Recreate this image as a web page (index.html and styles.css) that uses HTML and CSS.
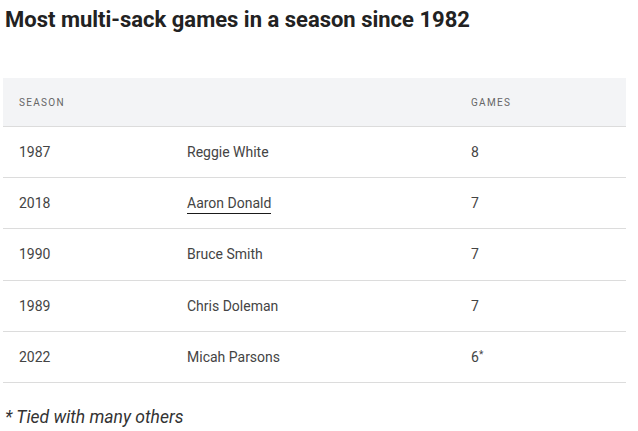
FILE: index.html
```html
<!DOCTYPE html>
<html>
<head>
<meta charset="utf-8">
<link rel="stylesheet" href="styles.css">
</head>
<body>
<div class="page">
  <h2 class="title">Most multi-sack games in a season since 1982</h2>
  <table class="stats">
    <thead>
      <tr><th class="c1">Season</th><th class="c2"></th><th class="c3">Games</th></tr>
    </thead>
    <tbody>
      <tr><td>1987</td><td>Reggie White</td><td>8</td></tr>
      <tr><td>2018</td><td><a class="link" href="#">Aaron Donald</a></td><td>7</td></tr>
      <tr><td>1990</td><td>Bruce Smith</td><td>7</td></tr>
      <tr><td>1989</td><td>Chris Doleman</td><td>7</td></tr>
      <tr><td>2022</td><td>Micah Parsons</td><td>6<sup class="star">*</sup></td></tr>
    </tbody>
  </table>
  <p class="note">* Tied with many others</p>
</div>
</body>
</html>
```
FILE: styles.css
```css
html, body { margin: 0; padding: 0; background: #fff; }
body { font-family: Roboto, "Liberation Sans", sans-serif; color: #333; }
.page { padding: 0 12px 0 3px; }
.title {
  margin: 0;
  padding: 6px 0 0 2px;
  font-size: 22px;
  line-height: 28px;
  font-weight: 700;
  color: #222;
  letter-spacing: 0;
}
.stats {
  margin-top: 44px;
  width: 623px;
  border-collapse: collapse;
  table-layout: fixed;
}
.stats th {
  background: #f3f4f6;
  height: 48px;
  padding: 0 16px;
  text-align: left;
  font-size: 10px;
  font-weight: 400;
  letter-spacing: 1.3px;
  text-transform: uppercase;
  color: #666;
  border-bottom: 1px solid #dcdcdc;
}
.stats .c1 { width: 136px; }
.stats .c2 { width: 252px; }
.stats td {
  height: 50.2px;
  padding: 0 16px;
  font-size: 14px;
  color: #444;
  border-bottom: 1px solid #dcdcdc;
}
.link { color: #444; text-decoration: none; border-bottom: 1px solid #1a1a1a; padding-bottom: 2px; }
.star { font-size: 10px; vertical-align: 4px; line-height: 0; }
.note {
  margin: 24px 0 0 2px;
  font-size: 17.5px;
  font-style: italic;
  color: #333;
}
```
